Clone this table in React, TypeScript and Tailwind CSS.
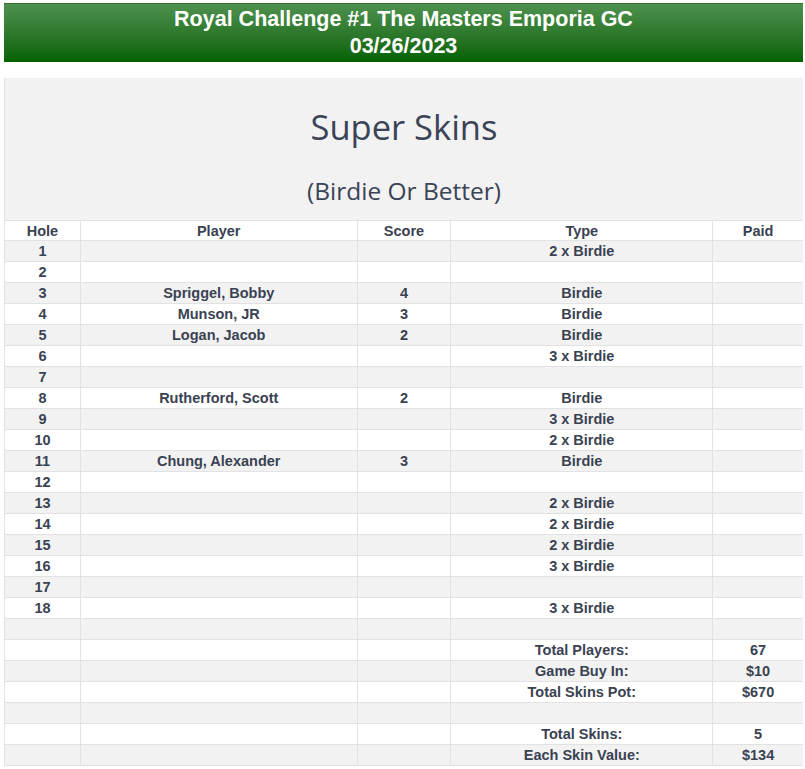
import React from "react";

const rows: [string, string, string, string, string][] = [
  ["1", "", "", "2 x Birdie", ""],
  ["2", "", "", "", ""],
  ["3", "Spriggel, Bobby", "4", "Birdie", ""],
  ["4", "Munson, JR", "3", "Birdie", ""],
  ["5", "Logan, Jacob", "2", "Birdie", ""],
  ["6", "", "", "3 x Birdie", ""],
  ["7", "", "", "", ""],
  ["8", "Rutherford, Scott", "2", "Birdie", ""],
  ["9", "", "", "3 x Birdie", ""],
  ["10", "", "", "2 x Birdie", ""],
  ["11", "Chung, Alexander", "3", "Birdie", ""],
  ["12", "", "", "", ""],
  ["13", "", "", "2 x Birdie", ""],
  ["14", "", "", "2 x Birdie", ""],
  ["15", "", "", "2 x Birdie", ""],
  ["16", "", "", "3 x Birdie", ""],
  ["17", "", "", "", ""],
  ["18", "", "", "3 x Birdie", ""],
  ["", "", "", "", ""],
  ["", "", "", "Total Players:", "67"],
  ["", "", "", "Game Buy In:", "$10"],
  ["", "", "", "Total Skins Pot:", "$670"],
  ["", "", "", "", ""],
  ["", "", "", "Total Skins:", "5"],
  ["", "", "", "Each Skin Value:", "$134"],
];

const widths = ["w-[76px]", "w-[277px]", "w-[94px]", "w-[262px]", "w-[90px]"];

function Row({ cells, bg, top }: { cells: string[]; bg: string; top?: boolean }) {
  return (
    <div className={`flex h-[21px] border-b border-[#e2e2e2] ${top ? "border-t" : ""} ${bg}`}>
      {cells.map((c, i) => (
        <div
          key={i}
          className={`${widths[i]} flex items-center justify-center leading-none pt-[1px] ${i < 4 ? "border-r border-[#e2e2e2]" : ""}`}
        >
          {c}
        </div>
      ))}
    </div>
  );
}

export default function App() {
  return (
    <div className="w-[805px] h-[769px] bg-white pl-[4px] pr-[2px] pt-[3px] text-[#3a4252]" style={{ fontFamily: '"Liberation Sans", Arial, sans-serif' }}>
      <div className="h-[59px] border-t border-[#2f6e2f] bg-gradient-to-b from-[#4d914d] to-[#006200] flex flex-col items-center justify-center text-white font-bold text-[21.5px] leading-[27px]">
        <div>Royal Challenge #1 The Masters Emporia GC</div>
        <div>03/26/2023</div>
      </div>
      <div className="mt-[16px] border-l border-[#e2e2e2]">
        <div className="h-[142px] bg-[#f2f2f2] flex flex-col items-center" style={{ fontFamily: '"Open Sans", sans-serif' }}>
          <div className="mt-[26px] text-[34.5px] leading-[46px] text-[#3b4356]">Super Skins</div>
          <div className="mt-[25px] text-[24.5px] leading-[32px] text-[#3b4356]">(Birdie Or Better)</div>
        </div>
        <div className="font-bold text-[14.5px]">
          <Row cells={["Hole", "Player", "Score", "Type", "Paid"]} bg="bg-white" top />
          {rows.map((r, i) => (
            <Row key={i} cells={r} bg={i % 2 === 0 ? "bg-[#f2f2f2]" : "bg-white"} />
          ))}
        </div>
      </div>
    </div>
  );
}
